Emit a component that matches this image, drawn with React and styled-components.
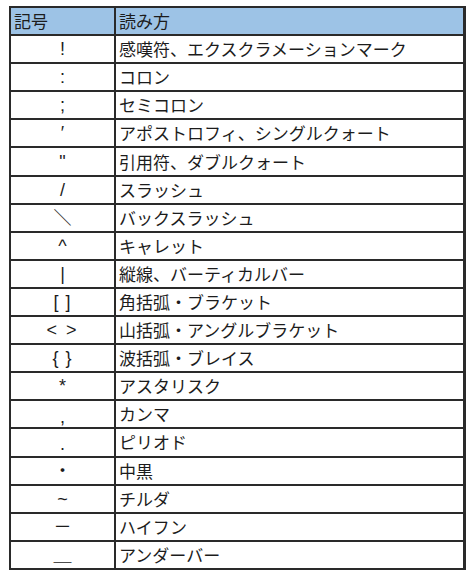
import React from "react";
import styled, { createGlobalStyle } from "styled-components";

const GlobalStyle = createGlobalStyle`
  html, body {
    margin: 0;
    padding: 0;
    background: #ffffff;
  }
  body {
    font-family: "Noto Sans CJK JP", "Noto Sans", sans-serif;
  }
`;

const Page = styled.div`
  padding: 6px 0 0 9px;
`;

const Table = styled.table`
  width: 457px;
  border-collapse: collapse;
  table-layout: fixed;
  color: #1c1c1c;
  font-size: 17px;
  line-height: 1;
  border: 2px solid #2a2a2a;
  border-right-width: 3px;
`;

const Row = styled.tr`
  height: 28.1px;
  background: ${(p) => (p.$head ? "#9dc3e6" : "#ffffff")};
`;

const Cell = styled.td`
  border: 2px solid #2a2a2a;
  padding: 0 0 1px 3px;
  text-align: ${(p) => (p.$center ? "center" : "left")};
  white-space: nowrap;
  vertical-align: middle;
  ${(p) => p.$center && "padding-left: 0;"}
`;

const Symbol = styled.span`
  font-family: "Liberation Sans", "Noto Sans CJK JP", sans-serif;
  font-size: 18px;
  letter-spacing: ${(p) => p.$spread || 0}px;
  position: relative;
  top: ${(p) => p.$low || 0}px;
`;

const rows = [
  ["!", "感嘆符、エクスクラメーションマーク"],
  [":", "コロン"],
  [";", "セミコロン"],
  ["′", "アポストロフィ、シングルクォート"],
  ['"', "引用符、ダブルクォート"],
  ["/", "スラッシュ"],
  ["＼", "バックスラッシュ"],
  ["^", "キャレット"],
  ["|", "縦線、バーティカルバー"],
  ["[ ]", "角括弧・ブラケット", 0, 1],
  ["< >", "山括弧・アングルブラケット", 0, 2],
  ["{ }", "波括弧・ブレイス", 0, 1],
  ["*", "アスタリスク"],
  [",", "カンマ", 3],
  [".", "ピリオド", 2],
  ["・", "中黒"],
  ["~", "チルダ"],
  ["－", "ハイフン"],
  ["＿", "アンダーバー"],
];

export default function App() {
  return (
    <>
      <GlobalStyle />
      <Page>
        <Table>
          <colgroup>
            <col style={{ width: 105 }} />
            <col />
          </colgroup>
          <tbody>
            <Row $head>
              <Cell>記号</Cell>
              <Cell>読み方</Cell>
            </Row>
            {rows.map(([sym, name, low, spread]) => (
              <Row key={name}>
                <Cell $center>
                  <Symbol $low={low} $spread={spread}>
                    {sym}
                  </Symbol>
                </Cell>
                <Cell>{name}</Cell>
              </Row>
            ))}
          </tbody>
        </Table>
      </Page>
    </>
  );
}
